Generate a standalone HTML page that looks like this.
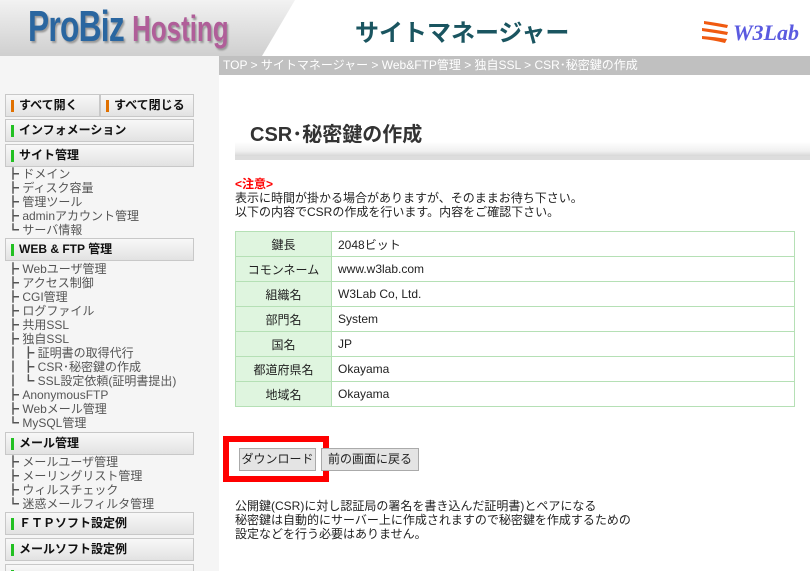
<!DOCTYPE html>
<html><head><meta charset="utf-8"><style>
*{margin:0;padding:0;box-sizing:border-box}
html,body{width:810px;height:571px;overflow:hidden}
body{background:#fff;font-family:"Liberation Sans","Noto Sans CJK JP",sans-serif;font-size:12px;color:#222;position:relative}
.hdr{position:absolute;left:0;top:0;width:810px;height:56px;background:#fff}
.hl{position:absolute;left:0;top:0;width:300px;height:56px;background:linear-gradient(#f2f2f2,#cfcfcf);clip-path:polygon(0 0,295px 0,262px 56px,0 56px)}
.logo{position:absolute;left:28px;top:2px;font:bold 44px "Liberation Sans",sans-serif;color:#2a66a0;letter-spacing:-1px;transform:scaleX(.72);transform-origin:left;text-shadow:2px 2px 2px #999;white-space:nowrap}
.logo span{color:#b05e99;font-size:36px;letter-spacing:0}
.title{position:absolute;left:355px;top:13px;font:bold 24px "Liberation Sans","Noto Sans CJK JP",sans-serif;color:#1a5560}
.w3{position:absolute;left:733px;top:20px;font:italic bold 22px "Liberation Serif",serif;color:#5a5ae0}
.flag{position:absolute;left:700px;top:19px;width:30px;height:26px}
.bc{position:absolute;left:219px;top:56px;width:591px;height:19px;background:#c0c0c0;color:#fff;font-size:12px;line-height:19px;padding-left:4px;white-space:nowrap}
.side{position:absolute;left:0;top:56px;width:219px;height:515px;background:#f5f5f5}
.btn{position:absolute;left:5px;width:189px;height:23px;background:linear-gradient(#f8f8f8,#e2e2e2);border:1px solid #c8c8c8;font-weight:bold;font-size:12px;line-height:21px;padding-left:13px;color:#111;white-space:nowrap;overflow:hidden}
.btn:before{content:"";position:absolute;left:5px;top:5px;width:3px;height:12px;background:#22c022}
.btn.o:before{background:#e07000}
.lk{position:absolute;left:7px;font-size:12px;color:#555;line-height:14px;white-space:nowrap}
.lk.g{color:#2a7a2a}
.h1{position:absolute;left:235px;top:108px;width:575px;height:52px;background:linear-gradient(#fff 70%,#f0f0f0 90%,#d8d8d8);border-bottom:4px solid #ddd}
.h1 b{position:absolute;left:15px;top:10px;font-size:20px;color:#333}
.txt{position:absolute;left:235px;font-size:12px;line-height:14px;color:#222;white-space:nowrap}
table{position:absolute;left:235px;top:231px;width:560px;border-collapse:collapse}
td{height:25px;border:1px solid #b5e0b5;font-size:12px;padding-left:6px}
td.l{width:96px;background:#dff5df;text-align:center;padding:0}
.b{position:absolute;top:448px;height:23px;background:#e4e4e4;border:1px solid #aaa;font-size:13px;line-height:21px;text-align:center;white-space:nowrap;overflow:hidden}
.red{position:absolute;left:223px;top:436px;width:106px;height:46px;border:6px solid #f00}
</style></head><body>
<div class="hdr"><div class="hl"></div><div class="logo">ProBiz <span>Hosting</span></div>
<div class="title">サイトマネージャー</div>
<svg class="flag" viewBox="0 0 30 26"><path d="M4 2 Q18 4 28 6 L27 9 Q16 7 4 5Z M2 9 Q18 11 28 13 L27 16 Q15 14 2 12Z M2 17 Q16 18 27 20 L25 24 Q13 21 2 20Z" fill="#f05a10"/></svg>
<div class="w3">W3Lab</div></div>
<div class="side"></div>
<div class="bc">TOP &gt; サイトマネージャー &gt; Web&amp;FTP管理 &gt; 独自SSL &gt; CSR･秘密鍵の作成</div>
<div class="btn o" style="top:94px;width:95px">すべて開く</div>
<div class="btn o" style="top:94px;left:100px;width:94px">すべて閉じる</div>
<div class="btn" style="top:119px">インフォメーション</div>
<div class="btn" style="top:144px">サイト管理</div>
<div class="lk" style="top:167px">┣ ドメイン<br>┣ ディスク容量<br>┣ 管理ツール<br>┣ adminアカウント管理<br>┗ サーバ情報</div>
<div class="btn" style="top:238px">WEB &amp; FTP 管理</div>
<div class="lk" style="top:262px">┣ Webユーザ管理<br>┣ アクセス制御<br>┣ CGI管理<br>┣ ログファイル<br>┣ 共用SSL<br>┣ 独自SSL<br><span class="g">┃ ┣ 証明書の取得代行<br>┃ ┣ CSR･秘密鍵の作成<br>┃ ┗ SSL設定依頼(証明書提出)</span><br>┣ AnonymousFTP<br>┣ Webメール管理<br>┗ MySQL管理</div>
<div class="btn" style="top:432px">メール管理</div>
<div class="lk" style="top:455px">┣ メールユーザ管理<br>┣ メーリングリスト管理<br>┣ ウィルスチェック<br>┗ 迷惑メールフィルタ管理</div>
<div class="btn" style="top:512px">ＦＴＰソフト設定例</div>
<div class="btn" style="top:538px">メールソフト設定例</div>
<div class="btn" style="top:564px"></div>
<div class="h1"><b>CSR･秘密鍵の作成</b></div>
<div class="txt" style="top:177px"><b style="color:#f00">&lt;注意&gt;</b><br>表示に時間が掛かる場合がありますが、そのままお待ち下さい。<br>以下の内容でCSRの作成を行います。内容をご確認下さい。</div>
<table>
<tr><td class="l">鍵長</td><td>2048ビット</td></tr>
<tr><td class="l">コモンネーム</td><td>www.w3lab.com</td></tr>
<tr><td class="l">組織名</td><td>W3Lab Co, Ltd.</td></tr>
<tr><td class="l">部門名</td><td>System</td></tr>
<tr><td class="l">国名</td><td>JP</td></tr>
<tr><td class="l">都道府県名</td><td>Okayama</td></tr>
<tr><td class="l">地域名</td><td>Okayama</td></tr>
</table>
<div class="b" style="left:239px;width:77px;font-size:12px">ダウンロード</div>
<div class="red"></div>
<div class="b" style="left:321px;width:98px;font-size:12px">前の画面に戻る</div>
<div class="txt" style="top:499px">公開鍵(CSR)に対し認証局の署名を書き込んだ証明書)とペアになる<br>秘密鍵は自動的にサーバー上に作成されますので秘密鍵を作成するための<br>設定などを行う必要はありません。</div>
</body></html>
